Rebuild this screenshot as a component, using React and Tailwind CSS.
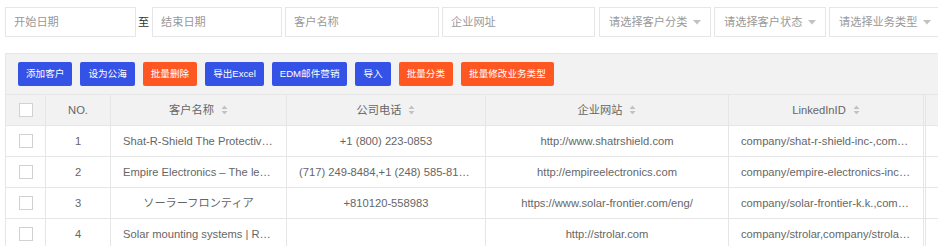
import React from "react";

const FONT = { fontFamily: '"Liberation Sans", Arial, "Noto Sans CJK SC", sans-serif' };

function SortIcon() {
  return (
    <svg width="7" height="10" viewBox="0 0 7 10" className="ml-[7px] shrink-0">
      <path d="M3.5 0.5 L6.5 4 L0.5 4 Z" fill="#c2c2c2" />
      <path d="M3.5 9.5 L6.5 6 L0.5 6 Z" fill="#c2c2c2" />
    </svg>
  );
}

function Arrow() {
  return (
    <svg width="8" height="5" viewBox="0 0 8 5" className="shrink-0">
      <path d="M0 0 L8 0 L4 4.5 Z" fill="#c2c2c2" />
    </svg>
  );
}

function Box({ w, text }) {
  return (
    <div
      className="h-[30px] border border-[#e6e6e6] bg-white flex items-center pl-[8px] text-[11.2px] text-[#999] shrink-0"
      style={{ width: w }}
    >
      {text}
    </div>
  );
}

function Select({ text }) {
  return (
    <div className="h-[30px] w-[112px] border border-[#e6e6e6] bg-white flex items-center justify-between pl-[9px] pr-[9px] text-[11.2px] text-[#999] shrink-0">
      <span className="whitespace-nowrap">{text}</span>
      <Arrow />
    </div>
  );
}

function Btn({ children, red }) {
  return (
    <div
      className={
        "h-[24px] px-[8px] flex items-center text-[9.6px] text-white rounded-[2px] whitespace-nowrap " +
        (red ? "bg-[#ff5722]" : "bg-[#3452e6]")
      }
    >
      {children}
    </div>
  );
}

const widths = [40, 65, 176, 199, 243, 195];

function Checkbox() {
  return <div className="w-[14px] h-[14px] border border-[#d2d2d2] bg-white" />;
}

function Cell({ w, children }) {
  return (
    <div
      className="h-full border-r border-[#e6e6e6] flex items-center justify-center px-[12px] shrink-0 overflow-hidden"
      style={{ width: w }}
    >
      {children}
    </div>
  );
}

function Txt({ children }) {
  return <span className="block truncate text-center w-full">{children}</span>;
}

function HeadLabel({ children, sort }) {
  return (
    <span className="flex items-center whitespace-nowrap">
      {children}
      {sort && <SortIcon />}
    </span>
  );
}

const rows = [
  ["1", "Shat-R-Shield The Protective Coatings Company", "+1 (800) 223-0853", "http://www.shatrshield.com", "company/shat-r-shield-inc-,company/shatrshield"],
  ["2", "Empire Electronics – The leader in lighting", "(717) 249-8484,+1 (248) 585-8130,+1 (800) 555-0100", "http://empireelectronics.com", "company/empire-electronics-inc,company/empire"],
  ["3", "ソーラーフロンティア", "+810120-558983", "https://www.solar-frontier.com/eng/", "company/solar-frontier-k.k.,company/solar"],
  ["4", "Solar mounting systems | Renusol", "", "http://strolar.com", "company/strolar,company/strolar-gmbh"],
];

export default function App() {
  return (
    <div className="w-[938px] h-[246px] overflow-hidden bg-white pl-[5px] pt-[7px]" style={FONT}>
      <div className="flex items-center w-[1000px]">
        <Box w={131} text="开始日期" />
        <span className="text-[11.2px] text-[#333] ml-[2px] mr-[3px] w-[11px] text-center">至</span>
        <Box w={130} text="结束日期" />
        <div className="w-[3px] shrink-0" />
        <Box w={154} text="客户名称" />
        <div className="w-[3px] shrink-0" />
        <Box w={153} text="企业网址" />
        <div className="w-[4px] shrink-0" />
        <Select text="请选择客户分类" />
        <div className="w-[3px] shrink-0" />
        <Select text="请选择客户状态" />
        <div className="w-[3px] shrink-0" />
        <Select text="请选择业务类型" />
      </div>

      <div className="mt-[16px] w-[1000px] border-l border-[#e6e6e6]">
        <div className="h-[42px] bg-[#f2f2f2] border-t border-b border-[#e6e6e6] flex items-center gap-[8px] pl-[12px]">
          <Btn>添加客户</Btn>
          <Btn>设为公海</Btn>
          <Btn red>批量删除</Btn>
          <Btn>导出Excel</Btn>
          <Btn>EDM邮件营销</Btn>
          <Btn>导入</Btn>
          <Btn red>批量分类</Btn>
          <Btn red>批量修改业务类型</Btn>
        </div>

        <div className="h-[31px] bg-[#f2f2f2] border-b border-[#e6e6e6] flex text-[11.2px] text-[#666]">
          <Cell w={widths[0]}><Checkbox /></Cell>
          <Cell w={widths[1]}><HeadLabel>NO.</HeadLabel></Cell>
          <Cell w={widths[2]}><HeadLabel sort>客户名称</HeadLabel></Cell>
          <Cell w={widths[3]}><HeadLabel sort>公司电话</HeadLabel></Cell>
          <Cell w={widths[4]}><HeadLabel sort>企业网站</HeadLabel></Cell>
          <Cell w={widths[5]}><HeadLabel sort>LinkedInID</HeadLabel></Cell>
          <div className="w-[2px] h-full border-r border-[#e6e6e6] shrink-0" />
          <div className="flex-1" />
        </div>

        {rows.map((r) => (
          <div key={r[0]} className="h-[31px] bg-white border-b border-[#e6e6e6] flex text-[11.2px] text-[#666]">
            <Cell w={widths[0]}><Checkbox /></Cell>
            <Cell w={widths[1]}><Txt>{r[0]}</Txt></Cell>
            <Cell w={widths[2]}><Txt>{r[1]}</Txt></Cell>
            <Cell w={widths[3]}><Txt>{r[2]}</Txt></Cell>
            <Cell w={widths[4]}><Txt>{r[3]}</Txt></Cell>
            <Cell w={widths[5]}><Txt>{r[4]}</Txt></Cell>
            <div className="w-[2px] h-full border-r border-[#e6e6e6] shrink-0" />
            <div className="flex-1" />
          </div>
        ))}
      </div>
    </div>
  );
}
